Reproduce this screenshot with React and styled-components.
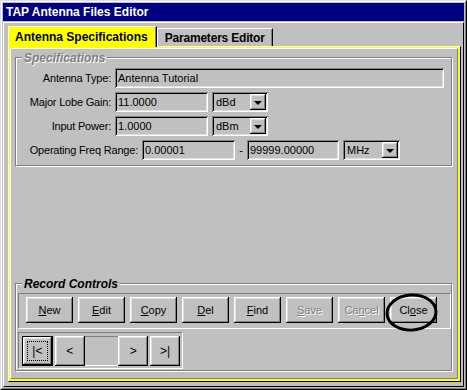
import React from 'react'
import styled, { createGlobalStyle, css } from 'styled-components'

const GlobalStyle = createGlobalStyle`
  * { box-sizing: border-box; }
  html, body { margin: 0; padding: 0; background: #c0c0c0; }
  body {
    font-family: "Liberation Sans", Arial, sans-serif;
    font-size: 11px;
    color: #000;
  }
`

const raised = css`
  box-shadow: inset -1px -1px 0 #000, inset 1px 1px 0 #fff,
    inset -2px -2px 0 #808080, inset 2px 2px 0 #dfdfdf;
`

const sunken = css`
  box-shadow: inset 1px 1px 0 #808080, inset -1px -1px 0 #fff,
    inset 2px 2px 0 #000, inset -2px -2px 0 #dfdfdf;
`

const App = () => {
  return (
    <>
      <GlobalStyle />
      <Window>
        <Frame>
          <TitleBar>TAP Antenna Files Editor</TitleBar>
          <Client>
            <TabStrip>
              <Tab $active>Antenna Specifications</Tab>
              <Tab>Parameters Editor</Tab>
            </TabStrip>
            <TabPanel>
              <YellowEdge>
                <TabBody>
                  <Group>
                    <Legend $disabled>Specifications</Legend>
                    <Rows>
                      <Row>
                        <Label $w={94}>Antenna Type:</Label>
                        <Field $w={329}>Antenna Tutorial</Field>
                      </Row>
                      <Row>
                        <Label $w={94}>Major Lobe Gain:</Label>
                        <Field $w={93}>11.0000</Field>
                        <Combo $w={56} value="dBd" />
                      </Row>
                      <Row>
                        <Label $w={94}>Input Power:</Label>
                        <Field $w={93}>1.0000</Field>
                        <Combo $w={56} value="dBm" />
                      </Row>
                      <Row>
                        <Label $w={121}>Operating Freq Range:</Label>
                        <Field $w={93}>0.00001</Field>
                        <Dash>-</Dash>
                        <Field $w={92}>99999.00000</Field>
                        <Combo $w={57} value="MHz" />
                      </Row>
                    </Rows>
                  </Group>

                  <Filler />

                  <Group $record>
                    <Legend>Record Controls</Legend>
                    <ButtonPanel>
                      <Button><Key>N</Key>ew</Button>
                      <Button><Key>E</Key>dit</Button>
                      <Button><Key>C</Key>opy</Button>
                      <Button><Key>D</Key>el</Button>
                      <Button><Key>F</Key>ind</Button>
                      <Button $disabled><Key>S</Key>ave</Button>
                      <Button $disabled>Ca<Key>n</Key>cel</Button>
                      <Button>
                        Cl<Key>o</Key>se
                        <Circle width="56" height="42" viewBox="0 0 56 42">
                          <ellipse cx="27.5" cy="20.5" rx="24.5" ry="17.5"
                            transform="rotate(-4 27.5 20.5)"
                            fill="none" stroke="#000" strokeWidth="3" />
                        </Circle>
                      </Button>
                    </ButtonPanel>
                    <NavPanel>
                      <NavButton $default><Focus>|&lt;</Focus></NavButton>
                      <NavButton>&lt;</NavButton>
                      <RecordBox />
                      <NavButton>&gt;</NavButton>
                      <NavButton $gap>&gt;|</NavButton>
                    </NavPanel>
                  </Group>
                </TabBody>
              </YellowEdge>
            </TabPanel>
          </Client>
        </Frame>
      </Window>
    </>
  )
}

const Combo = ({ $w, value }) => (
  <ComboBox $w={$w}>
    <ComboText>{value}</ComboText>
    <DropButton><Arrow /></DropButton>
  </ComboBox>
)

export default App

const Window = styled.div`
  width: 467px;
  height: 390px;
  background: #c0c0c0;
  border: 1px solid;
  border-color: #dfdfdf #000 #000 #dfdfdf;
`

const Frame = styled.div`
  height: 100%;
  display: flex;
  flex-direction: column;
  padding: 1px;
  border: 1px solid;
  border-color: #fff #808080 #808080 #fff;
`

const TitleBar = styled.div`
  height: 18px;
  margin-bottom: 1px;
  padding-left: 3px;
  display: flex;
  align-items: center;
  background: #000080;
  color: #fff;
  font-weight: bold;
  font-size: 12px;
`

const Client = styled.div`
  flex: 1;
  display: flex;
  flex-direction: column;
  border: 1px solid;
  border-color: #fff #000 #000 #fff;
  padding: 3px 2px 4px 4px;
`

const TabStrip = styled.div`
  height: 20px;
  display: flex;
  align-items: flex-end;
  position: relative;
  z-index: 1;
`

const Tab = styled.div`
  display: flex;
  align-items: center;
  font-weight: bold;
  font-size: 12px;
  border: solid;
  border-width: 1px 1px 0 1px;
  border-color: #fff #000 #000 #fff;
  box-shadow: inset -1px 0 0 #808080;
  ${p => p.$active ? css`
    height: 21px;
    margin-bottom: -1px;
    padding: 0 8px 0 6px;
    background: #ffff00;
  ` : css`
    height: 18px;
    padding: 0 7px 0 7px;
    letter-spacing: -0.2px;
    background: #c0c0c0;
  `}
`

const TabPanel = styled.div`
  flex: 1;
  display: flex;
  border: 1px solid;
  border-color: #fff #000 #000 #fff;
`

const YellowEdge = styled.div`
  flex: 1;
  display: flex;
  border: solid #ffff00;
  border-width: 1px 2px 2px 1px;
`

const TabBody = styled.div`
  flex: 1;
  display: flex;
  flex-direction: column;
  border: 1px solid;
  border-color: #fff #808080 #808080 #fff;
  padding: 8px 5px 7px 4px;
`

const Filler = styled.div`
  flex: 1;
`

const Group = styled.div`
  position: relative;
  border: 1px solid #808080;
  box-shadow: inset 1px 1px 0 #fff, 1px 1px 0 #fff;
  padding: ${p => p.$record ? '9px 0 1px 2px' : '10px 0 5px 1px'};
`

const Legend = styled.span`
  position: absolute;
  top: -7px;
  left: 6px;
  padding: 0 2px;
  line-height: 14px;
  background: #c0c0c0;
  font-style: italic;
  font-weight: bold;
  font-size: 12px;
  color: ${p => p.$disabled ? '#808080' : '#000'};
  text-shadow: ${p => p.$disabled ? '1px 1px 0 #fff' : 'none'};
`

const Rows = styled.div`
  display: flex;
  flex-direction: column;
  gap: 4px;
`

const Row = styled.div`
  display: flex;
  align-items: center;
  gap: 4px;
  height: 20px;
`

const Label = styled.div`
  width: ${p => p.$w}px;
  flex: none;
  text-align: right;
  white-space: nowrap;
  letter-spacing: -0.2px;
`

const Field = styled.div`
  width: ${p => p.$w}px;
  height: 20px;
  flex: none;
  display: flex;
  align-items: center;
  padding-left: 3px;
  background: #c0c0c0;
  ${sunken}
`

const Dash = styled.span`
  width: 4px;
  text-align: center;
`

const ComboBox = styled.div`
  width: ${p => p.$w}px;
  height: 20px;
  flex: none;
  display: flex;
  align-items: center;
  padding: 2px;
  background: #c0c0c0;
  ${sunken}
`

const ComboText = styled.span`
  flex: 1;
  padding-left: 2px;
`

const DropButton = styled.div`
  width: 16px;
  height: 16px;
  display: flex;
  align-items: center;
  justify-content: center;
  background: #c0c0c0;
  ${raised}
`

const Arrow = styled.div`
  width: 0;
  height: 0;
  border-left: 4px solid transparent;
  border-right: 4px solid transparent;
  border-top: 4px solid #000;
  margin-top: 1px;
`

const ButtonPanel = styled.div`
  display: flex;
  gap: 5px;
  padding: 3px 9px 5px 7px;
  border: 1px solid;
  border-color: #808080 #fff #fff #808080;
`

const Button = styled.div`
  position: relative;
  width: 47px;
  height: 26px;
  display: flex;
  align-items: center;
  justify-content: center;
  background: #c0c0c0;
  color: ${p => p.$disabled ? '#808080' : '#000'};
  text-shadow: ${p => p.$disabled ? '1px 1px 0 #fff' : 'none'};
  ${raised}
`

const Key = styled.span`
  text-decoration: underline;
`

const Circle = styled.svg`
  position: absolute;
  left: -6px;
  top: -5px;
`

const NavPanel = styled.div`
  width: 165px;
  margin-top: 3px;
  display: flex;
  padding: 3px 2px 2px 3px;
  border: 1px solid;
  border-color: #808080 #fff #fff #808080;
`

const NavButton = styled.div`
  width: ${p => p.$default ? 31 : 30}px;
  height: 30px;
  margin-left: ${p => p.$gap ? 2 : 0}px;
  margin-right: ${p => p.$default ? 2 : 0}px;
  display: flex;
  align-items: center;
  justify-content: center;
  font-size: 12px;
  background: #c0c0c0;
  ${p => p.$default ? css`
    box-shadow: inset 0 0 0 1px #000, inset -2px -2px 0 #000, inset 2px 2px 0 #fff,
      inset -3px -3px 0 #808080, inset 3px 3px 0 #dfdfdf;
  ` : raised}
`

const Focus = styled.span`
  width: 21px;
  height: 20px;
  display: flex;
  align-items: center;
  justify-content: center;
  border: 1px dotted #000;
`

const RecordBox = styled.div`
  width: 34px;
  height: 30px;
  background: #c0c0c0;
  border-top: 1px solid #808080;
  border-bottom: 1px solid #fff;
`
